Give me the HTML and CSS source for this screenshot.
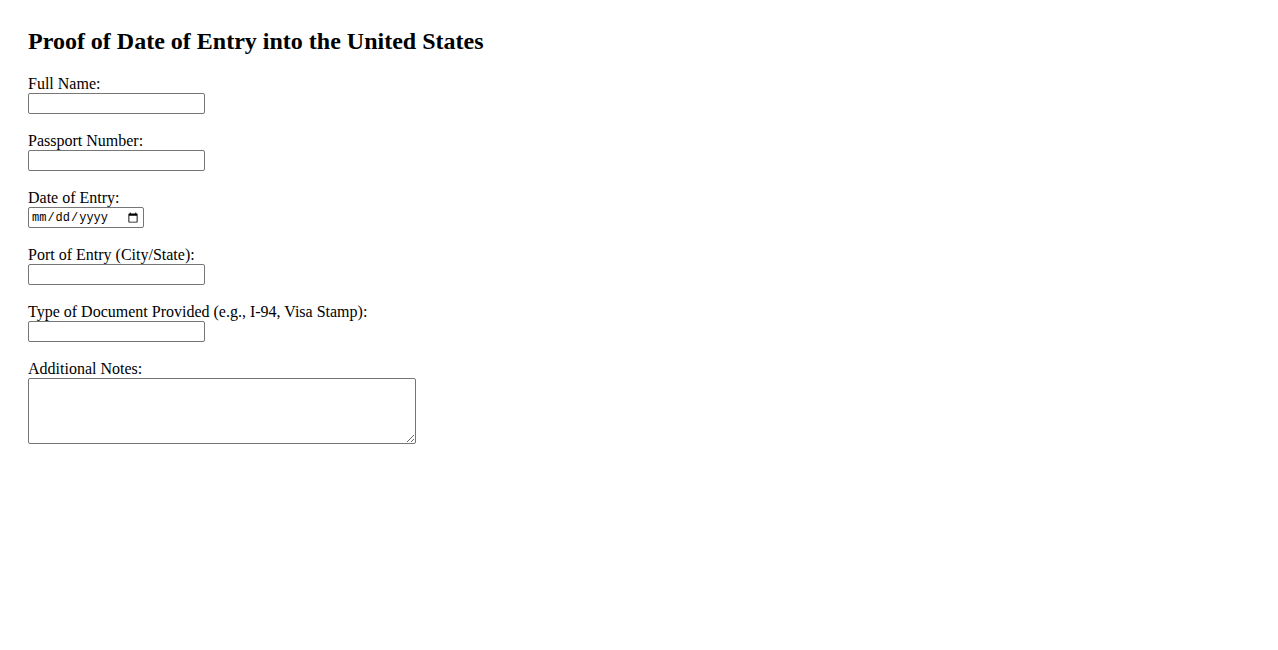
FILE: index.html
```html
<!DOCTYPE html>
<html>
<head>
<meta charset="utf-8">
<link rel="stylesheet" href="styles.css">
</head>
<body>
<div class="page">
  <h2 class="title">Proof of Date of Entry into the United States</h2>
  <form class="form">
    <div class="field">
      <label class="label" for="name">Full Name:</label>
      <input class="text" type="text" id="name">
    </div>
    <div class="field">
      <label class="label" for="passport">Passport Number:</label>
      <input class="text" type="text" id="passport">
    </div>
    <div class="field">
      <label class="label" for="date">Date of Entry:</label>
      <input class="date" type="date" id="date">
    </div>
    <div class="field">
      <label class="label" for="port">Port of Entry (City/State):</label>
      <input class="text" type="text" id="port">
    </div>
    <div class="field">
      <label class="label" for="doc">Type of Document Provided (e.g., I-94, Visa Stamp):</label>
      <input class="text" type="text" id="doc">
    </div>
    <div class="field">
      <label class="label" for="notes">Additional Notes:</label>
      <textarea class="notes" id="notes"></textarea>
    </div>
  </form>
</div>
</body>
</html>
```

FILE: styles.css
```css
html, body {
  margin: 0;
  padding: 0;
  background: #fff;
}
.page {
  padding: 28px 28px;
  font-family: "Liberation Serif", "Times New Roman", serif;
  font-size: 16px;
  color: #000;
}
.title {
  font-size: 24px;
  font-weight: bold;
  margin: 0 0 20px 0;
}
.form {
  display: flex;
  flex-direction: column;
  gap: 18px;
}
.field {
  display: flex;
  flex-direction: column;
  align-items: flex-start;
}
.label {
  line-height: 18px;
}
.text {
  box-sizing: border-box;
  width: 177px;
  height: 21px;
  margin: 0;
  border: 1px solid #767676;
  border-radius: 2px;
}
.date {
  box-sizing: border-box;
  width: 116px;
  height: 21px;
  margin: 0;
  padding: 1px 2px 0 2px;
  font-family: "Liberation Mono", "Courier New", monospace;
  font-size: 12px;
  color: #000;
  border: 1px solid #767676;
  border-radius: 2px;
}
.notes {
  box-sizing: border-box;
  width: 388px;
  height: 66px;
  margin: 0;
  border: 1px solid #767676;
  border-radius: 2px;
}
```
